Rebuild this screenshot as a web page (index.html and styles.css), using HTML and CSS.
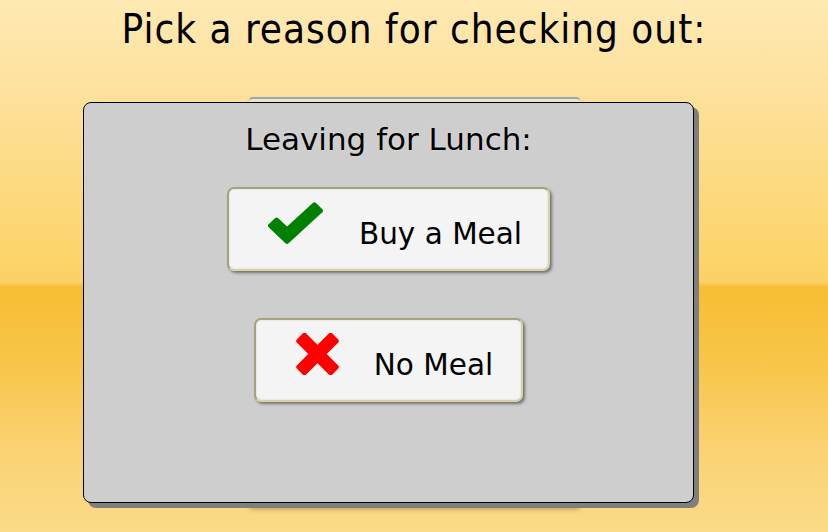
FILE: index.html
```html
<!DOCTYPE html>
<html lang="en">
<head>
<meta charset="utf-8">
<title>Checkout reason</title>
<link rel="stylesheet" href="styles.css">
</head>
<body>
<main class="screen">
  <h1 class="title">Pick a reason for checking out:</h1>
  <div class="behind"></div>

  <section class="dialog">
    <h2 class="dialog-title">Leaving for Lunch:</h2>
    <div class="choices">
      <button class="choice" type="button">
        <svg class="icon icon-check" width="55" height="42" viewBox="3.2 1.8 48.6 39" preserveAspectRatio="none" aria-hidden="true">
          <polygon points="5.2,23.8 20,38.6 49.8,9.9 44.2,4.1 20,27.4 10.8,18.2" fill="#008000" stroke="#008000" stroke-width="4" stroke-linejoin="round"/>
        </svg>
        <span class="choice-label">Buy a Meal</span>
      </button>
      <button class="choice choice-no" type="button">
        <svg class="icon icon-x" width="43" height="42" viewBox="0 0 43 42" aria-hidden="true">
          <g transform="translate(21.5 21)" fill="#ff0000">
            <rect x="-25" y="-6.5" width="50" height="13" rx="2.5" transform="rotate(45)"/>
            <rect x="-25" y="-6.5" width="50" height="13" rx="2.5" transform="rotate(-45)"/>
          </g>
        </svg>
        <span class="choice-label">No Meal</span>
      </button>
    </div>
  </section>
</main>
</body>
</html>
```

FILE: styles.css
```css
html, body {
  margin: 0;
  padding: 0;
  height: 100%;
}

body {
  min-height: 532px;
  background: linear-gradient(to bottom,
    #fee9b3 0px,
    #fde09a 100px,
    #fcd56c 250px,
    #fbd164 282px,
    #f6be33 287px,
    #f8c548 360px,
    #fad272 450px,
    #fbdb88 532px);
  font-family: "DejaVu Sans", "Liberation Sans", sans-serif;
  color: #000;
  overflow: hidden;
}

.screen {
  position: relative;
  height: 532px;
  padding-top: 6px;
  box-sizing: border-box;
}

.title {
  margin: 0;
  font-family: "DejaVu Sans Condensed", "DejaVu Sans", sans-serif;
  font-stretch: condensed;
  font-weight: normal;
  font-size: 40px;
  line-height: normal;
  letter-spacing: 1px;
  text-align: center;
}

.behind {
  width: 331px;
  height: 408px;
  margin: 45px auto 0;
  box-sizing: border-box;
  border-top: 2px solid #93a9b8;
  border-radius: 4px;
  background: #ece6c6;
  box-shadow: 0 4px 5px rgba(0, 0, 0, 0.3);
}

.dialog {
  position: absolute;
  left: 83px;
  top: 102px;
  width: 611px;
  height: 401px;
  box-sizing: border-box;
  border: 1px solid #000;
  border-radius: 8px;
  background: #cecece;
  box-shadow: 5px 5px 0 #7f7f7f;
  padding-top: 18px;
  display: flex;
  flex-direction: column;
  align-items: center;
}

.dialog-title {
  margin: 0;
  font-weight: normal;
  font-size: 31px;
  line-height: normal;
  text-shadow: 0 0 2px rgba(255, 255, 255, 0.5);
}

.choices {
  margin-top: 30px;
  display: flex;
  flex-direction: column;
  align-items: center;
  gap: 47px;
}

.choice {
  display: flex;
  align-items: center;
  height: 84px;
  box-sizing: border-box;
  padding: 0 26px 0 39px;
  gap: 36px;
  border: 2px solid #a6a27a;
  border-right-color: #d8d4a2;
  border-bottom-color: #d8d4a2;
  border-radius: 7px;
  background: #f4f4f4;
  box-shadow: 2px 2px 3px rgba(0, 0, 0, 0.45), inset 0 0 2px rgba(0, 0, 0, 0.15);
  font-family: "DejaVu Sans", "Liberation Sans", sans-serif;
  font-size: 29.5px;
  color: #000;
  cursor: pointer;
}

.choice-no {
  padding: 0 28px 0 40px;
}

.icon {
  display: block;
  flex: none;
  margin-bottom: 12px;
}

.icon-x {
  margin-right: -1px;
}

.choice-label {
  margin-top: 9px;
  line-height: normal;
}
```
